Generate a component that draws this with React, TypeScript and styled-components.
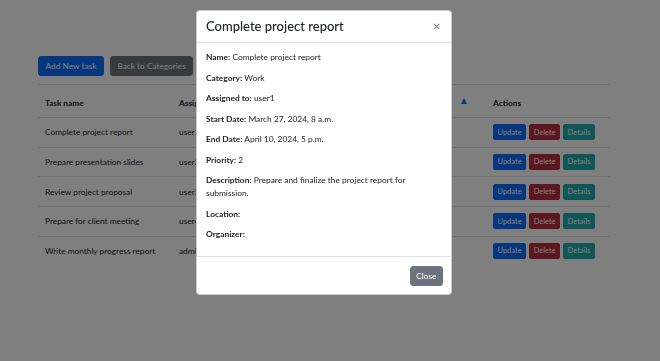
import styled, { createGlobalStyle } from "styled-components";

const GlobalStyle = createGlobalStyle`
	html, body {
		margin: 0;
		padding: 0;
		background: #ffffff;
		font-family: "Lato", "Noto Sans", sans-serif;
		color: #212529;
		overflow: hidden;
	}
`;

const tasks = [
	{ name: "Complete project report", user: "user1", category: "Work", priority: 2, due: "Apr 10" },
	{ name: "Prepare presentation slides", user: "user2", category: "Work", priority: 1, due: "Apr 12" },
	{ name: "Review project proposal", user: "user3", category: "Work", priority: 3, due: "Apr 15" },
	{ name: "Prepare for client meeting", user: "user4", category: "Meeting", priority: 2, due: "Apr 18" },
	{ name: "Write monthly progress report", user: "admin", category: "Work", priority: 1, due: "Apr 30" },
];

const details: [string, string][] = [
	["Name:", "Complete project report"],
	["Category:", "Work"],
	["Assigned to:", "user1"],
	["Start Date:", "March 27, 2024, 8 a.m."],
	["End Date:", "April 10, 2024, 5 p.m."],
	["Priority:", "2"],
	["Description:", "Prepare and finalize the project report for submission."],
	["Location:", ""],
	["Organizer:", ""],
];

const App = () => {
	return (
		<>
			<GlobalStyle />
			<Page>
				<Container>
					<Toolbar>
						<Button variant="primary">Add New task</Button>
						<Button variant="secondary">Back to Categories</Button>
					</Toolbar>
					<Table>
						<colgroup>
							<col style={{ width: 134 }} />
							<col style={{ width: 90 }} />
							<col style={{ width: 80 }} />
							<col style={{ width: 60 }} />
							<col style={{ width: 84 }} />
							<col style={{ width: 124 }} />
						</colgroup>
						<thead>
							<tr>
								<th>Task name</th>
								<th>Assigned to</th>
								<th>Category</th>
								<th>Due date</th>
								<th>
									Priority
									<SortIcon />
								</th>
								<th>Actions</th>
							</tr>
						</thead>
						<tbody>
							{tasks.map((t) => (
								<tr key={t.name}>
									<td>{t.name}</td>
									<td>{t.user}</td>
									<td>{t.category}</td>
									<td>{t.due}</td>
									<td>{t.priority}</td>
									<td>
										<Actions>
											<SmallButton variant="primary">Update</SmallButton>
											<SmallButton variant="danger">Delete</SmallButton>
											<SmallButton variant="info">Details</SmallButton>
										</Actions>
									</td>
								</tr>
							))}
						</tbody>
					</Table>
				</Container>
			</Page>

			<Backdrop>
				<Modal>
					<ModalHeader>
						<ModalTitle>Complete project report</ModalTitle>
						<CloseX aria-label="Close">
							<svg width="7" height="7" viewBox="0 0 16 16">
								<path d="M2 2L14 14M14 2L2 14" stroke="#000" strokeWidth="2.4" />
							</svg>
						</CloseX>
					</ModalHeader>
					<ModalBody>
						{details.map(([label, value]) => (
							<Field key={label}>
								<strong>{label}</strong> {value}
							</Field>
						))}
					</ModalBody>
					<ModalFooter>
						<Button variant="secondary" compact>
							Close
						</Button>
					</ModalFooter>
				</Modal>
			</Backdrop>
		</>
	);
};

const palette: Record<string, string> = {
	primary: "#0d6efd",
	secondary: "#6c757d",
	danger: "#b82c3a",
	info: "#22acac",
};

interface IButton {
	variant: string;
	compact?: boolean;
}

const Page = styled.div`
	width: 648px;
	height: 361px;
`;

const Container = styled.div`
	width: 572px;
	margin-left: 38px;
	padding-top: 56px;
`;

const Toolbar = styled.div`
	display: flex;
	gap: 6px;
	padding-bottom: 8px;
	border-bottom: 1px solid #dee2e6;
`;

const Button = styled.button<IButton>`
	height: 20px;
	padding: 0 ${(props) => (props.compact ? "5.5px" : "6.5px")};
	border: 1px solid ${(props) => palette[props.variant]};
	border-radius: 3px;
	background: ${(props) => palette[props.variant]};
	color: #ffffff;
	font-family: inherit;
	font-size: 8.3px;
	line-height: 1;
	cursor: pointer;
`;

const Table = styled.table`
	width: 100%;
	table-layout: fixed;
	border-collapse: collapse;
	font-size: 8.3px;

	th {
		height: 28px;
		padding: 4px 7px 0;
		text-align: left;
		font-weight: 700;
		border-bottom: 1px solid #dee2e6;
		white-space: nowrap;
	}

	td {
		height: 28.7px;
		padding: 0 7px;
		border-bottom: 1px solid #dee2e6;
		white-space: nowrap;
		overflow: hidden;
	}

	tbody tr:last-child td {
		border-bottom: none;
	}
`;

const SortIcon = styled.span`
	float: right;
	margin-right: 12px;
	width: 0;
	height: 0;
	border-left: 3.5px solid transparent;
	border-right: 3.5px solid transparent;
	border-bottom: 6px solid #0d6efd;
`;

const Actions = styled.div`
	display: flex;
	gap: 3px;
`;

const SmallButton = styled.button<IButton>`
	height: 16px;
	padding: 0 3.5px;
	border: 1px solid ${(props) => palette[props.variant]};
	border-radius: 2px;
	background: ${(props) => palette[props.variant]};
	color: #ffffff;
	font-family: "Lato", sans-serif;
	font-size: 7.5px;
	line-height: 1;
`;

const Backdrop = styled.div`
	position: fixed;
	inset: 0;
	background: rgba(0, 0, 0, 0.5);
	padding-right: 12px;
	display: flex;
	justify-content: center;
	align-items: flex-start;
	padding-top: 10px;
`;

const Modal = styled.div`
	width: 256px;
	background: #ffffff;
	border: 1px solid rgba(0, 0, 0, 0.2);
	border-radius: 4px;
	box-sizing: border-box;
`;

const ModalHeader = styled.div`
	display: flex;
	align-items: center;
	justify-content: space-between;
	height: 31px;
	padding: 0 9px;
	border-bottom: 1px solid #dee2e6;
`;

const ModalTitle = styled.h5`
	margin: 0;
	font-size: 13px;
	font-weight: 500;
	line-height: 1.2;
`;

const CloseX = styled.button`
	display: flex;
	align-items: center;
	justify-content: center;
	width: 12px;
	height: 12px;
	padding: 0;
	border: none;
	background: transparent;
	opacity: 0.5;
`;

const ModalBody = styled.div`
	padding: 8px 9px 8px;
	border-bottom: 1px solid #dee2e6;
`;

const Field = styled.p`
	margin: 0 0 7.5px;
	font-size: 8.4px;
	line-height: 13px;

	&:last-child {
		margin-bottom: 7px;
	}

	strong {
		font-weight: 700;
	}
`;

const ModalFooter = styled.div`
	display: flex;
	justify-content: flex-end;
	padding: 9px 8px 8px;
`;

export default App;
